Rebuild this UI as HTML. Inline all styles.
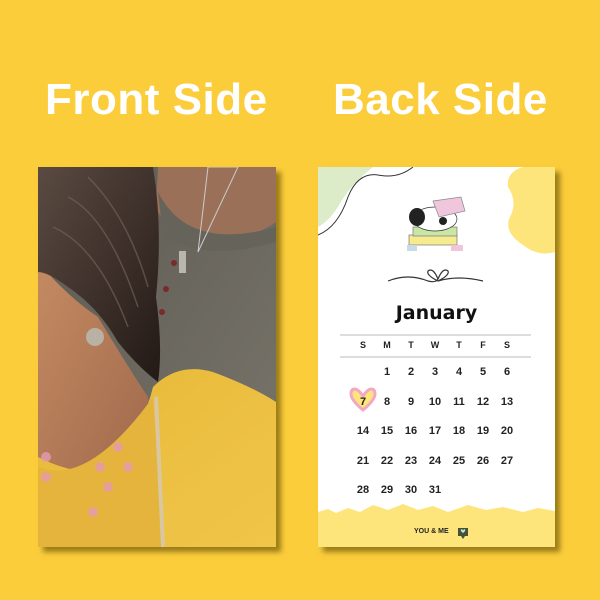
<!DOCTYPE html>
<html><head><meta charset="utf-8"><style>
*{margin:0;padding:0;box-sizing:border-box}
body{width:600px;height:600px;background:#FBCD3B;position:relative;overflow:hidden;font-family:"Liberation Sans",sans-serif}
.t{position:absolute;top:75px;color:#fff;font-weight:bold;font-size:44px;letter-spacing:0.5px;white-space:nowrap}
.photo{position:absolute;left:38px;top:167px;width:238px;height:380px;box-shadow:5px 5px 5px rgba(90,70,0,0.6)}
.card{position:absolute;left:318px;top:167px;width:237px;height:380px;background:#fff;box-shadow:5px 5px 5px rgba(90,70,0,0.6);overflow:hidden}
.n{position:absolute;width:24px;text-align:center;font-size:11px;font-weight:bold;color:#222;font-family:"Liberation Sans",sans-serif}
</style></head><body>
<div class="t" style="left:45px">Front Side</div>
<div class="t" style="left:333px">Back Side</div>

<svg class="photo" viewBox="0 0 238 380" width="238" height="380">
<defs>
<linearGradient id="hair" x1="0" y1="0" x2="1" y2="1"><stop offset="0" stop-color="#5a4a42"/><stop offset="0.6" stop-color="#3a2d27"/><stop offset="1" stop-color="#221915"/></linearGradient>
<linearGradient id="shirt" x1="0" y1="0" x2="1" y2="1"><stop offset="0" stop-color="#5d5a52"/><stop offset="1" stop-color="#7a766c"/></linearGradient>
<linearGradient id="skin" x1="0" y1="0" x2="1" y2="1"><stop offset="0" stop-color="#c48a62"/><stop offset="1" stop-color="#9c6649"/></linearGradient>
<linearGradient id="kurta" x1="0" y1="0" x2="1" y2="1"><stop offset="0" stop-color="#e8b83a"/><stop offset="1" stop-color="#f0c648"/></linearGradient>
</defs>
<rect width="238" height="380" fill="url(#shirt)"/>
<path d="M120 0 L238 0 L238 55 Q200 80 160 78 Q130 70 118 40 Z" fill="#9b7058"/>
<path d="M120 25 Q150 85 238 60 L238 75 Q170 95 125 70 Z" fill="#66635b"/>
<path d="M0 95 Q30 130 60 150 Q90 200 110 230 L120 290 L0 340 Z" fill="url(#skin)"/>
<path d="M0 0 L115 0 Q125 60 118 130 Q125 180 120 215 Q100 200 80 175 Q60 140 30 120 Q10 105 0 105 Z" fill="url(#hair)"/>
<path d="M30 30 Q70 50 100 140 M15 60 Q60 80 90 160 M50 10 Q90 50 110 120" stroke="#7a675c" stroke-width="1.5" fill="none" opacity="0.6"/>
<path d="M115 220 Q140 195 175 205 Q215 220 238 235 L238 380 L0 380 L0 290 Q40 310 60 300 Q100 280 115 220 Z" fill="url(#kurta)"/>
<path d="M0 300 Q50 320 115 230 L125 380 L0 380 Z" fill="#e4b43c"/>
<g fill="#e79bb0" opacity="0.8"><circle cx="8" cy="290" r="5"/><circle cx="8" cy="310" r="5"/><circle cx="62" cy="300" r="5"/><circle cx="80" cy="280" r="5"/><circle cx="70" cy="320" r="5"/><circle cx="90" cy="300" r="5"/><circle cx="55" cy="345" r="5"/></g>
<path d="M118 230 L125 380" stroke="#d8c7a0" stroke-width="4" fill="none"/>
<circle cx="57" cy="170" r="9" fill="#b8b1a4"/>
<path d="M170 0 L200 0 L160 85 Z" fill="none" stroke="#ccc" stroke-width="1"/>
<rect x="141" y="84" width="7" height="22" fill="#b9b6ae"/>
<g fill="#7a2a2a"><circle cx="136" cy="96" r="3"/><circle cx="128" cy="122" r="3"/><circle cx="124" cy="145" r="3"/></g>
</svg>

<div class="card">
<svg width="237" height="380" style="position:absolute;left:0;top:0">
<path d="M0 0 L55 0 Q30 20 20 40 Q10 55 0 60 Z" fill="#dcecc8"/>
<path d="M0 68 Q20 60 30 30 Q40 5 60 8 Q80 12 95 0" stroke="#333" stroke-width="1" fill="none"/>
<path d="M237 0 L237 85 Q220 90 205 78 Q185 65 192 50 Q200 35 190 20 Q188 5 205 0 Z" fill="#FDE57B"/>
<g transform="translate(85,30)">
<rect x="6" y="38" width="48" height="10" fill="#f7eb90" stroke="#777" stroke-width="0.7"/>
<rect x="10" y="30" width="44" height="9" fill="#c9e6a5" stroke="#777" stroke-width="0.7"/>
<ellipse cx="32" cy="22" rx="22" ry="12" fill="#fff" stroke="#333" stroke-width="0.7"/>
<ellipse cx="14" cy="20" rx="8" ry="9" fill="#222"/>
<ellipse cx="40" cy="24" rx="4" ry="4" fill="#222"/>
<path d="M30 4 L58 0 L62 14 L36 20 Z" fill="#f0c6dc" stroke="#888" stroke-width="0.7"/>
<rect x="4" y="48" width="10" height="6" fill="#c9dbea"/><rect x="48" y="48" width="12" height="6" fill="#f0c6dc"/>
</g>
<path d="M70 114 Q90 106 110 114 Q118 116 120 112 M120 112 Q115 100 110 104 Q108 108 120 114 Q132 108 130 104 Q125 100 120 112 M120 114 Q140 108 165 114" stroke="#333" stroke-width="1.2" fill="none"/>
<line x1="22" y1="168" x2="213" y2="168" stroke="#bbb" stroke-width="1"/>
<line x1="22" y1="190" x2="213" y2="190" stroke="#bbb" stroke-width="1"/>
<path d="M45 229 Q40 222 37 222 Q33 222 33 227 Q33 233 45 243 Q57 233 57 227 Q57 222 53 222 Q50 222 45 229 Z" fill="#FDE57B" stroke="#f2a7c5" stroke-width="3"/>
<path d="M0 345 L10 342 L18 346 L30 341 L42 345 L55 338 L70 343 L85 337 L100 343 L115 339 L130 345 L150 338 L168 343 L185 340 L205 345 L220 341 L237 344 L237 380 L0 380 Z" fill="#FDE57B"/>
<path d="M140 361 h10 v8 h-3 l-2 3 l-2 -3 h-3 Z" fill="#44503a"/>
<path d="M145 363 l-2 -1 q-1 2 2 4 q3 -2 2 -4 z" fill="#bfe7c7"/>
</svg>
<div style="position:absolute;left:0;width:237px;top:135px;text-align:center;font-size:19px;font-weight:bold;color:#111;font-family:'DejaVu Sans',sans-serif">January</div>
<div class="n" style="left:33px;top:173px;font-size:9px">S</div><div class="n" style="left:57px;top:173px;font-size:9px">M</div><div class="n" style="left:81px;top:173px;font-size:9px">T</div><div class="n" style="left:105px;top:173px;font-size:9px">W</div><div class="n" style="left:129px;top:173px;font-size:9px">T</div><div class="n" style="left:153px;top:173px;font-size:9px">F</div><div class="n" style="left:177px;top:173px;font-size:9px">S</div>
<div class="n" style="left:57px;top:199px">1</div><div class="n" style="left:81px;top:199px">2</div><div class="n" style="left:105px;top:199px">3</div><div class="n" style="left:129px;top:199px">4</div><div class="n" style="left:153px;top:199px">5</div><div class="n" style="left:177px;top:199px">6</div>
<div class="n" style="left:33px;top:229px">7</div><div class="n" style="left:57px;top:229px">8</div><div class="n" style="left:81px;top:229px">9</div><div class="n" style="left:105px;top:229px">10</div><div class="n" style="left:129px;top:229px">11</div><div class="n" style="left:153px;top:229px">12</div><div class="n" style="left:177px;top:229px">13</div>
<div class="n" style="left:33px;top:258px">14</div><div class="n" style="left:57px;top:258px">15</div><div class="n" style="left:81px;top:258px">16</div><div class="n" style="left:105px;top:258px">17</div><div class="n" style="left:129px;top:258px">18</div><div class="n" style="left:153px;top:258px">19</div><div class="n" style="left:177px;top:258px">20</div>
<div class="n" style="left:33px;top:288px">21</div><div class="n" style="left:57px;top:288px">22</div><div class="n" style="left:81px;top:288px">23</div><div class="n" style="left:105px;top:288px">24</div><div class="n" style="left:129px;top:288px">25</div><div class="n" style="left:153px;top:288px">26</div><div class="n" style="left:177px;top:288px">27</div>
<div class="n" style="left:33px;top:317px">28</div><div class="n" style="left:57px;top:317px">29</div><div class="n" style="left:81px;top:317px">30</div><div class="n" style="left:105px;top:317px">31</div>
<div style="position:absolute;left:96px;top:361px;font-size:7px;font-weight:bold;color:#222">YOU &amp; ME</div>
</div>
</body></html>
